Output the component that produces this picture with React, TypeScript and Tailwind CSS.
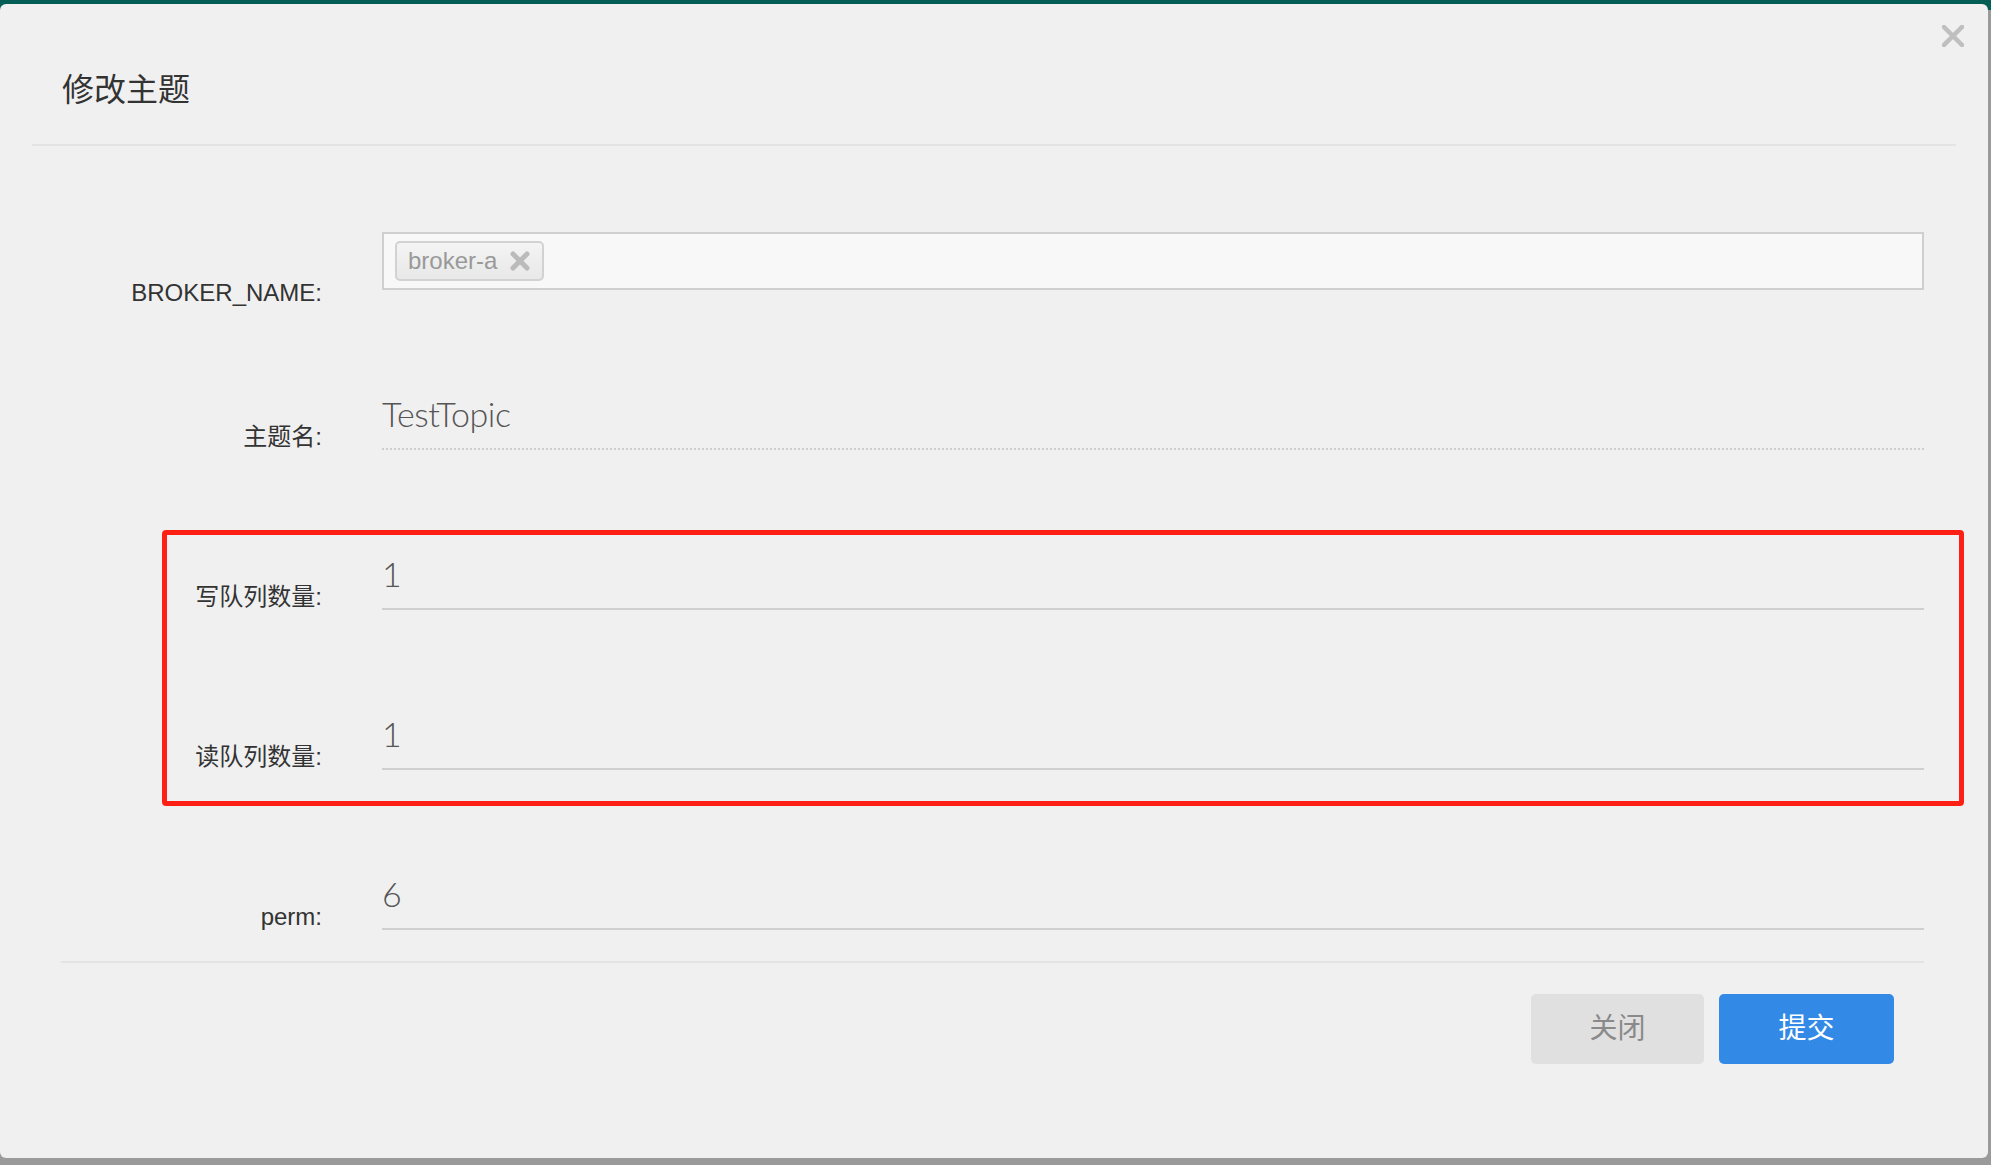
import React from 'react';

const rows = [
  { label: '主题名:', value: 'TestTopic', dotted: true },
  { label: '写队列数量:', value: '1', dotted: false },
  { label: '读队列数量:', value: '1', dotted: false },
  { label: 'perm:', value: '6', dotted: false },
];

const labelFont = "font-['Liberation_Sans','Noto_Sans_CJK_SC',sans-serif]";

export default function App() {
  return (
    <div className="w-[1991px] h-[1165px] bg-[linear-gradient(#055e55_0_10px,#9a9a9a_10px)] pt-[4px] overflow-hidden">
      <div className="relative w-[1988px] h-[1154px] bg-[#f0f0f0] rounded-[6px] flex flex-col">
        {/* header */}
        <div className="mx-[32px] h-[142px] border-b-2 border-[#e4e4e4] flex items-start pl-[30px] pt-[66px]">
          <h2 className={`${labelFont} text-[32px] leading-[40px] text-[#333] font-normal`}>修改主题</h2>
        </div>
        <button className="absolute top-[21px] right-[24px] w-[22px] h-[22px]" aria-label="close">
          <svg viewBox="0 0 22 22" className="w-[22px] h-[22px]">
            <path d="M2 2 L20 20 M20 2 L2 20" stroke="#bfbfbf" strokeWidth="4.5" strokeLinecap="square" />
          </svg>
        </button>

        {/* form */}
        <div className="flex flex-col gap-[102px] pt-[86px]">
          <div className="flex h-[58px]">
            <div className={`${labelFont} w-[322px] shrink-0 text-right text-[24px] leading-[30px] text-[#333] mt-[46px]`}>
              BROKER_NAME:
            </div>
            <div className="ml-[60px] mr-[64px] flex-1 h-[58px] border-2 border-[#cfcfcf] bg-[#f8f8f8] flex items-center pl-[11px]">
              <span className="flex items-center h-[40px] pl-[11px] pr-[12px] gap-[13px] rounded-[5px] border-2 border-[#d2d2d2] bg-[linear-gradient(#f4f4f4,#e8e8e8)]">
                <span className={`${labelFont} text-[24px] text-[#999]`}>broker-a</span>
                <svg viewBox="0 0 20 20" className="w-[20px] h-[20px]">
                  <path d="M3 3 L17 17 M17 3 L3 17" stroke="#bbbbbb" strokeWidth="5" strokeLinecap="round" />
                </svg>
              </span>
            </div>
          </div>

          {rows.map((r) => (
            <div key={r.label} className="flex h-[58px]">
              <div className={`${labelFont} w-[322px] shrink-0 text-right text-[24px] leading-[30px] text-[#333] mt-[30px]`}>
                {r.label}
              </div>
              <div
                className={`ml-[60px] mr-[64px] flex-1 h-[58px] ${
                  r.dotted ? 'border-b-2 border-dotted border-[#cdcdcd]' : 'border-b-2 border-[#cfcfcf]'
                }`}
              >
                <div className="font-['Lato','Open_Sans',sans-serif] font-light text-[34px] leading-[44px] text-[#555] tracking-[-0.5px]">
                  {r.value}
                </div>
              </div>
            </div>
          ))}
        </div>

        {/* footer */}
        <div className="ml-[61px] mr-[64px] mt-[31px] border-t-2 border-[#e4e4e4] flex justify-end gap-[15px] pt-[31px] pr-[30px]">
          <button className={`${labelFont} w-[173px] h-[70px] rounded-[5px] bg-[#e0e0e0] text-[28px] text-[#8a8a8a]`}>
            关闭
          </button>
          <button className={`${labelFont} w-[175px] h-[70px] rounded-[5px] bg-[#3389e6] text-[28px] text-white`}>
            提交
          </button>
        </div>

        {/* red annotation box */}
        <div className="absolute left-[162px] top-[526px] w-[1802px] h-[276px] border-[5px] border-[#ff2015] rounded-[4px] pointer-events-none" />
      </div>
    </div>
  );
}
